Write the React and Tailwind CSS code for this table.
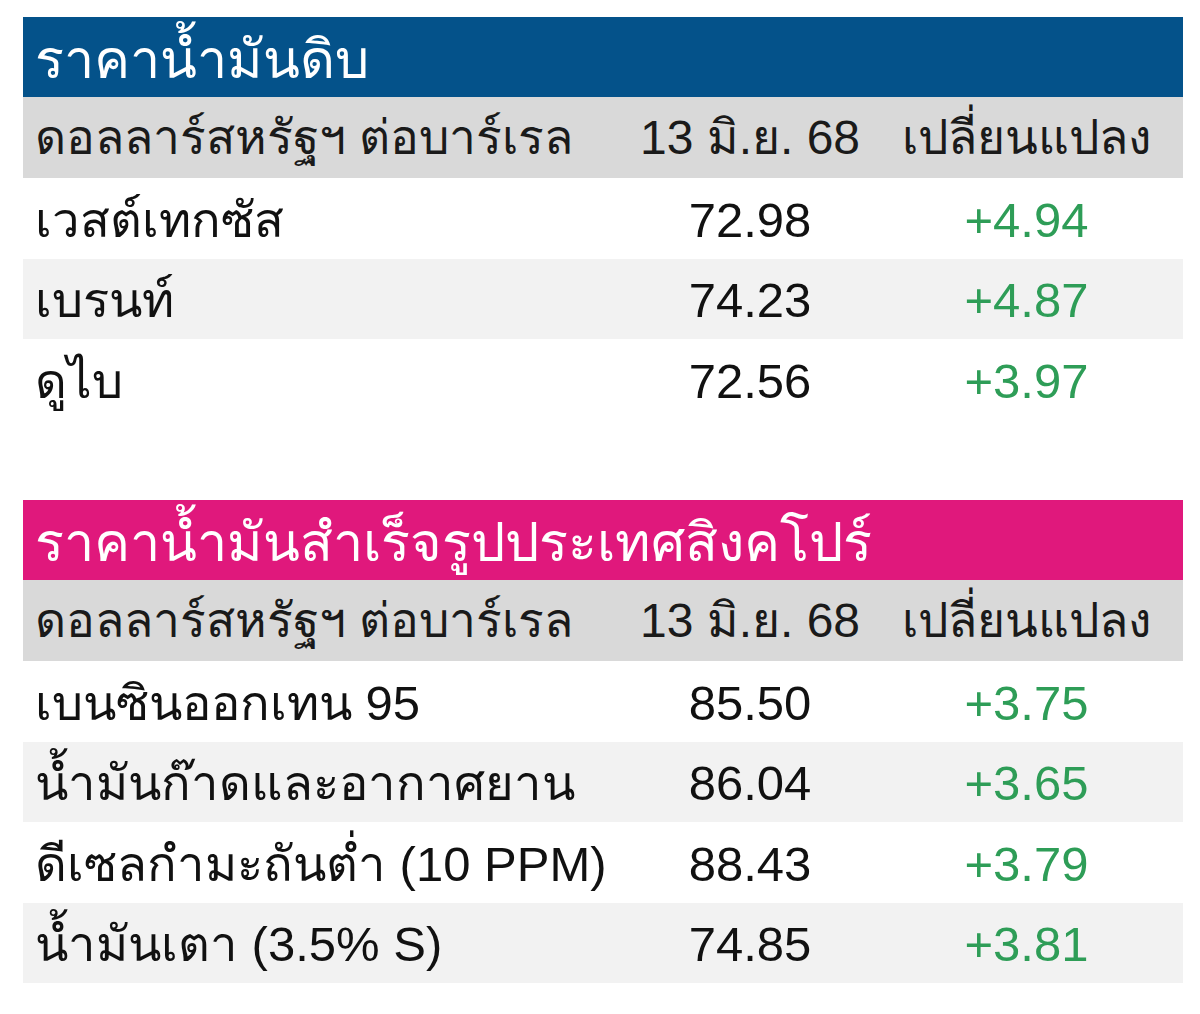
const crude = [
  { name: "เวสต์เทกซัส", price: "72.98", change: "+4.94" },
  { name: "เบรนท์", price: "74.23", change: "+4.87" },
  { name: "ดูไบ", price: "72.56", change: "+3.97" },
];

const refined = [
  { name: "เบนซินออกเทน 95", price: "85.50", change: "+3.75" },
  { name: "น้ำมันก๊าดและอากาศยาน", price: "86.04", change: "+3.65" },
  { name: "ดีเซลกำมะถันต่ำ (10 PPM)", price: "88.43", change: "+3.79" },
  { name: "น้ำมันเตา (3.5% S)", price: "74.85", change: "+3.81" },
];

function PriceTable({ title, titleBg, rows }) {
  return (
    <div className="w-[1160px]">
      <div className={`h-20 flex items-center pt-1 px-3 text-white text-[54px] ${titleBg}`}>
        {title}
      </div>
      <div className="h-[81px] grid grid-cols-[607px_240px_313px] items-center bg-[#d9d9d9] text-[#1a1a1a] text-[48px]">
        <div className="px-3">ดอลลาร์สหรัฐฯ ต่อบาร์เรล</div>
        <div className="text-center">13 มิ.ย. 68</div>
        <div className="text-center">เปลี่ยนแปลง</div>
      </div>
      {rows.map((r, i) => (
        <div
          key={r.name}
          className={`h-[80.5px] grid grid-cols-[607px_240px_313px] items-center text-[49px] ${i % 2 === 1 ? "bg-[#f2f2f2]" : "bg-white"}`}
        >
          <div className="px-3 pt-1 text-[#111]">{r.name}</div>
          <div className="text-center pt-1 text-[#111]">{r.price}</div>
          <div className="text-center pt-1 text-[#2e9d57]">{r.change}</div>
        </div>
      ))}
    </div>
  );
}

export default function App() {
  return (
    <div className="w-[1200px] h-[1014px] bg-white pt-[17px] pl-[23px] font-['Liberation_Sans',Tahoma,sans-serif]">
      <PriceTable title="ราคาน้ำมันดิบ" titleBg="bg-[#04528a]" rows={crude} />
      <div className="h-[80.5px]" />
      <PriceTable title="ราคาน้ำมันสำเร็จรูปประเทศสิงคโปร์" titleBg="bg-[#e0187c]" rows={refined} />
    </div>
  );
}
